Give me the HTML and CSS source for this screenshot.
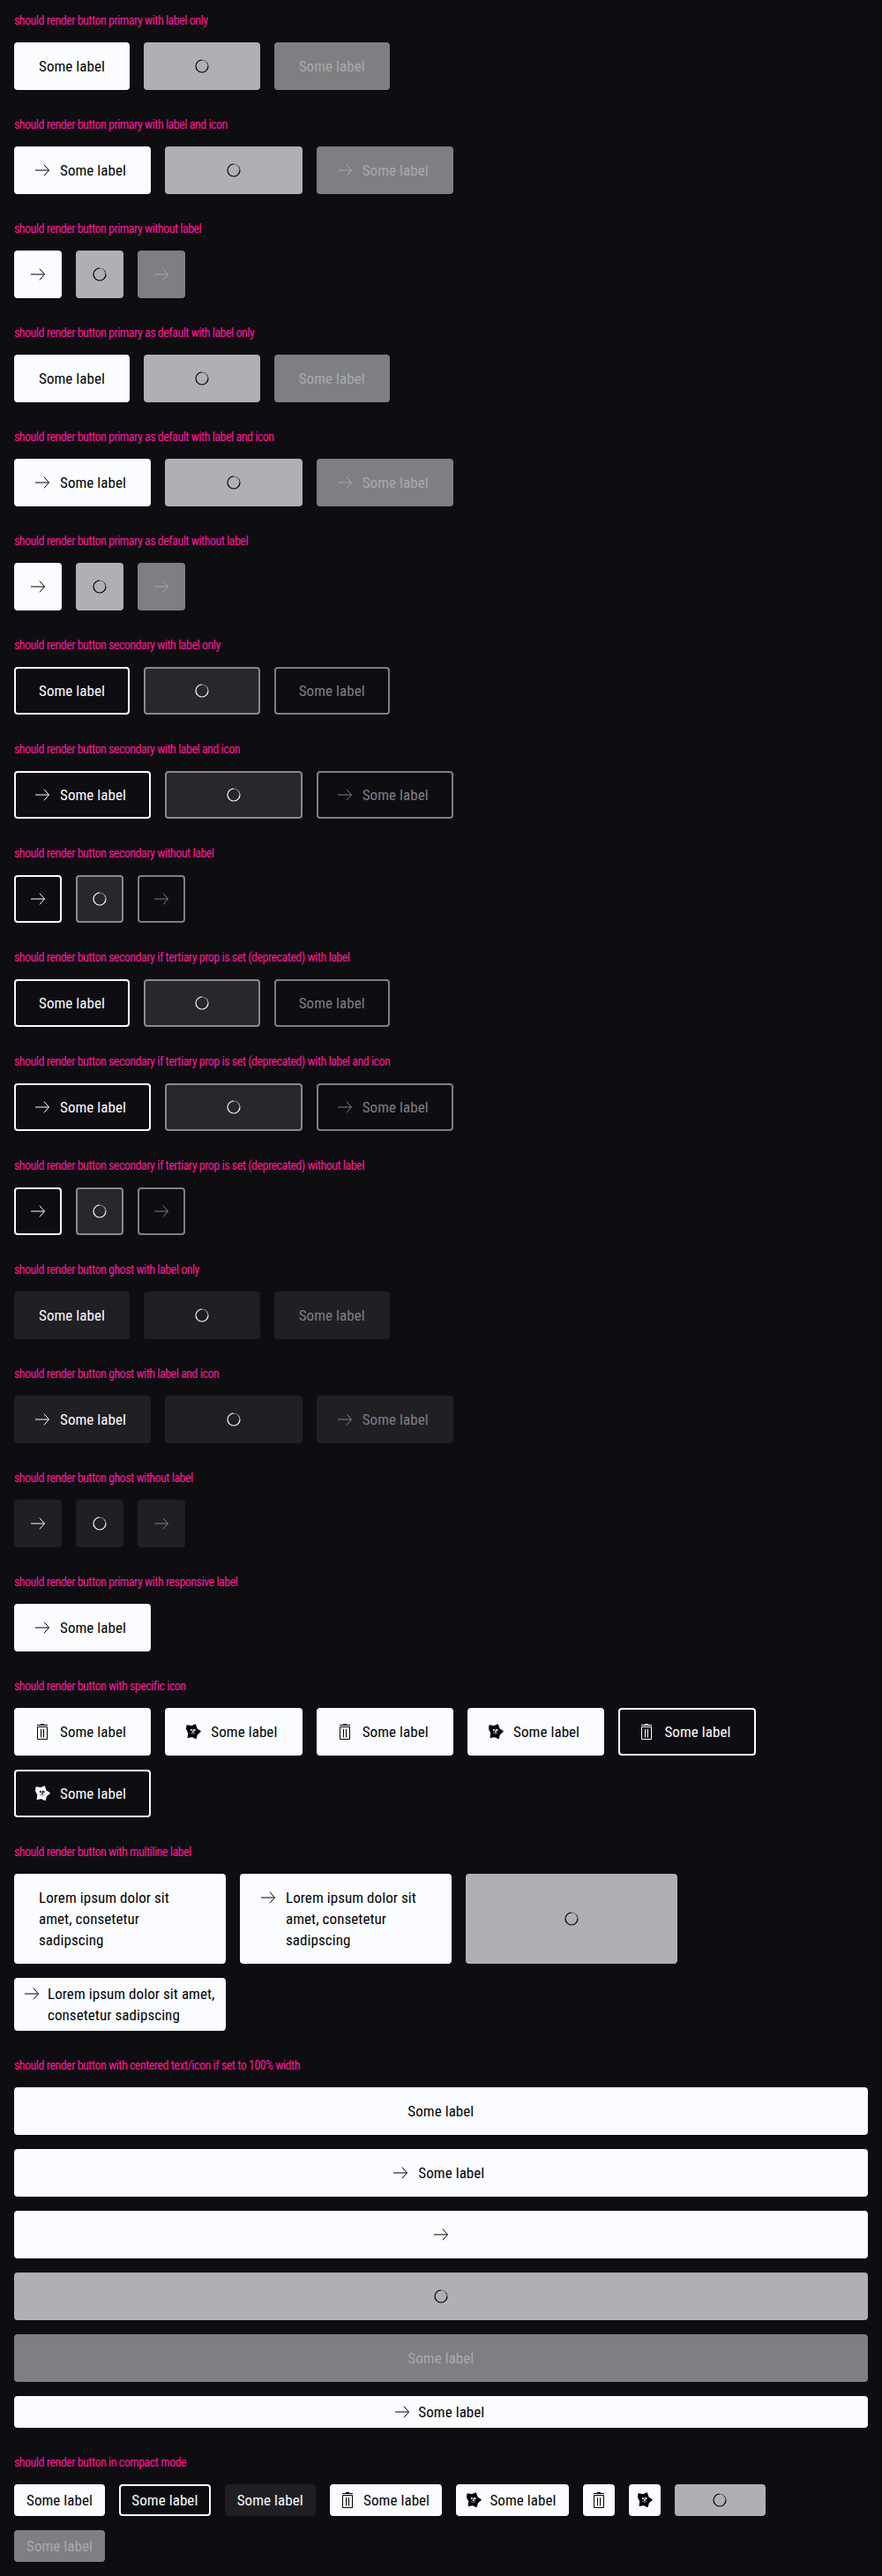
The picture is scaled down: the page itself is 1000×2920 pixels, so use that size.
FILE: index.html
```html
<!DOCTYPE html>
<html lang="en">
<head>
<meta charset="utf-8">
<title>Button</title>
<link rel="stylesheet" href="styles.css">
</head>
<body>
<svg class="sprite" aria-hidden="true">
  <symbol id="arrow" viewBox="0 0 24 24"><path d="M4 12H19.4M13.9 5.7L19.5 12L13.9 18.3" fill="none" stroke="currentColor"/></symbol>
  <symbol id="spin" viewBox="0 0 24 24"><g fill="none" stroke="currentColor" stroke-width="1.2"><path d="M12 5A7 7 0 1 0 19 12"/><path d="M19 12A7 7 0 0 0 17.4 7.6" opacity=".6"/><path d="M17.4 7.6A7 7 0 0 0 12 5" opacity=".4"/></g></symbol>
  <symbol id="trash" viewBox="0 0 24 24"><path d="M6 4.5H18M10 3.5H14M6.5 6.5H17.5V20.5H6.5ZM10.5 9V18.5M13.5 9V18.5" fill="none" stroke="currentColor"/></symbol>
  <symbol id="star" viewBox="0 0 24 24"><path d="M5.2 5L10.2 6L14.3 4.2L15.8 8.8L20 11.6L16.2 14.8L15 19.3L11 17.2L6.4 18.3L7.1 13.4L4.8 9Z" fill="currentColor" stroke="currentColor" stroke-width="1.6" stroke-linejoin="round"/><g class="face"><circle cx="10.2" cy="10" r="1.3"/><circle cx="13.2" cy="10.2" r="1.4"/><circle cx="11.8" cy="12.2" r="1"/></g><g fill="currentColor"><circle cx="10.6" cy="9.8" r=".6"/><circle cx="13" cy="10" r=".6"/></g><path class="smile" d="M9 13.2Q11.5 15.8 14.4 13.4"/></symbol>
</svg>

<section><h2>should render button primary with label only</h2><div class="row">
  <button class="btn primary"><span>Some label</span></button>
  <button class="btn primary loading"><span>Some label</span><svg><use href="#spin"/></svg></button>
  <button class="btn primary disabled"><span>Some label</span></button>
</div></section>

<section><h2>should render button primary with label and icon</h2><div class="row">
  <button class="btn primary icon"><svg><use href="#arrow"/></svg><span>Some label</span></button>
  <button class="btn primary icon loading"><span>Some label</span><svg><use href="#spin"/></svg></button>
  <button class="btn primary icon disabled"><svg><use href="#arrow"/></svg><span>Some label</span></button>
</div></section>

<section><h2>should render button primary without label</h2><div class="row">
  <button class="btn primary square"><svg><use href="#arrow"/></svg></button>
  <button class="btn primary square loading"><svg><use href="#spin"/></svg></button>
  <button class="btn primary square disabled"><svg><use href="#arrow"/></svg></button>
</div></section>

<section><h2>should render button primary as default with label only</h2><div class="row">
  <button class="btn primary"><span>Some label</span></button>
  <button class="btn primary loading"><span>Some label</span><svg><use href="#spin"/></svg></button>
  <button class="btn primary disabled"><span>Some label</span></button>
</div></section>

<section><h2>should render button primary as default with label and icon</h2><div class="row">
  <button class="btn primary icon"><svg><use href="#arrow"/></svg><span>Some label</span></button>
  <button class="btn primary icon loading"><span>Some label</span><svg><use href="#spin"/></svg></button>
  <button class="btn primary icon disabled"><svg><use href="#arrow"/></svg><span>Some label</span></button>
</div></section>

<section><h2>should render button primary as default without label</h2><div class="row">
  <button class="btn primary square"><svg><use href="#arrow"/></svg></button>
  <button class="btn primary square loading"><svg><use href="#spin"/></svg></button>
  <button class="btn primary square disabled"><svg><use href="#arrow"/></svg></button>
</div></section>

<section><h2>should render button secondary with label only</h2><div class="row">
  <button class="btn secondary"><span>Some label</span></button>
  <button class="btn secondary loading"><span>Some label</span><svg><use href="#spin"/></svg></button>
  <button class="btn secondary disabled"><span>Some label</span></button>
</div></section>

<section><h2>should render button secondary with label and icon</h2><div class="row">
  <button class="btn secondary icon"><svg><use href="#arrow"/></svg><span>Some label</span></button>
  <button class="btn secondary icon loading"><span>Some label</span><svg><use href="#spin"/></svg></button>
  <button class="btn secondary icon disabled"><svg><use href="#arrow"/></svg><span>Some label</span></button>
</div></section>

<section><h2>should render button secondary without label</h2><div class="row">
  <button class="btn secondary square"><svg><use href="#arrow"/></svg></button>
  <button class="btn secondary square loading"><svg><use href="#spin"/></svg></button>
  <button class="btn secondary square disabled"><svg><use href="#arrow"/></svg></button>
</div></section>

<section><h2>should render button secondary if tertiary prop is set (deprecated) with label</h2><div class="row">
  <button class="btn secondary"><span>Some label</span></button>
  <button class="btn secondary loading"><span>Some label</span><svg><use href="#spin"/></svg></button>
  <button class="btn secondary disabled"><span>Some label</span></button>
</div></section>

<section><h2>should render button secondary if tertiary prop is set (deprecated) with label and icon</h2><div class="row">
  <button class="btn secondary icon"><svg><use href="#arrow"/></svg><span>Some label</span></button>
  <button class="btn secondary icon loading"><span>Some label</span><svg><use href="#spin"/></svg></button>
  <button class="btn secondary icon disabled"><svg><use href="#arrow"/></svg><span>Some label</span></button>
</div></section>

<section><h2>should render button secondary if tertiary prop is set (deprecated) without label</h2><div class="row">
  <button class="btn secondary square"><svg><use href="#arrow"/></svg></button>
  <button class="btn secondary square loading"><svg><use href="#spin"/></svg></button>
  <button class="btn secondary square disabled"><svg><use href="#arrow"/></svg></button>
</div></section>

<section><h2>should render button ghost with label only</h2><div class="row">
  <button class="btn ghost"><span>Some label</span></button>
  <button class="btn ghost loading"><span>Some label</span><svg><use href="#spin"/></svg></button>
  <button class="btn ghost disabled"><span>Some label</span></button>
</div></section>

<section><h2>should render button ghost with label and icon</h2><div class="row">
  <button class="btn ghost icon"><svg><use href="#arrow"/></svg><span>Some label</span></button>
  <button class="btn ghost icon loading"><span>Some label</span><svg><use href="#spin"/></svg></button>
  <button class="btn ghost icon disabled"><svg><use href="#arrow"/></svg><span>Some label</span></button>
</div></section>

<section><h2>should render button ghost without label</h2><div class="row">
  <button class="btn ghost square"><svg><use href="#arrow"/></svg></button>
  <button class="btn ghost square loading"><svg><use href="#spin"/></svg></button>
  <button class="btn ghost square disabled"><svg><use href="#arrow"/></svg></button>
</div></section>

<section><h2>should render button primary with responsive label</h2><div class="row">
  <button class="btn primary icon"><svg><use href="#arrow"/></svg><span>Some label</span></button>
</div></section>

<section><h2>should render button with specific icon</h2><div class="row narrow">
  <button class="btn primary icon"><svg><use href="#trash"/></svg><span>Some label</span></button>
  <button class="btn primary icon"><svg><use href="#star"/></svg><span>Some label</span></button>
  <button class="btn primary icon"><svg><use href="#trash"/></svg><span>Some label</span></button>
  <button class="btn primary icon"><svg><use href="#star"/></svg><span>Some label</span></button>
  <button class="btn secondary icon"><svg><use href="#trash"/></svg><span>Some label</span></button>
  <button class="btn secondary icon"><svg><use href="#star"/></svg><span>Some label</span></button>
</div></section>

<section><h2>should render button with multiline label</h2><div class="row narrow">
  <button class="btn primary multi"><span>Lorem ipsum dolor sit<br>amet, consetetur<br>sadipscing</span></button>
  <button class="btn primary icon multi"><svg><use href="#arrow"/></svg><span>Lorem ipsum dolor sit<br>amet, consetetur<br>sadipscing</span></button>
  <button class="btn primary multi loading"><svg><use href="#spin"/></svg></button>
  <button class="btn primary icon multi compact"><svg><use href="#arrow"/></svg><span>Lorem ipsum dolor sit amet,<br>consetetur sadipscing</span></button>
</div></section>

<section><h2>should render button with centered text/icon if set to 100% width</h2><div class="row stack">
  <button class="btn primary"><span>Some label</span></button>
  <button class="btn primary icon"><svg><use href="#arrow"/></svg><span>Some label</span></button>
  <button class="btn primary"><svg><use href="#arrow"/></svg></button>
  <button class="btn primary loading"><svg><use href="#spin"/></svg></button>
  <button class="btn primary disabled"><span>Some label</span></button>
  <button class="btn primary icon compact"><svg><use href="#arrow"/></svg><span>Some label</span></button>
</div></section>

<section><h2>should render button in compact mode</h2><div class="row narrow">
  <button class="btn primary compact"><span>Some label</span></button>
  <button class="btn secondary compact"><span>Some label</span></button>
  <button class="btn ghost compact"><span>Some label</span></button>
  <button class="btn primary icon compact"><svg><use href="#trash"/></svg><span>Some label</span></button>
  <button class="btn primary icon compact"><svg><use href="#star"/></svg><span>Some label</span></button>
  <button class="btn primary square compact"><svg><use href="#trash"/></svg></button>
  <button class="btn primary square compact"><svg><use href="#star"/></svg></button>
  <button class="btn primary compact loading"><span>Some label</span><svg><use href="#spin"/></svg></button>
  <button class="btn primary compact disabled"><span>Some label</span></button>
</div></section>
</body>
</html>
```
FILE: styles.css
```css
* { box-sizing: border-box; }

body {
  margin: 0;
  background: #0e0e12;
  font-family: "Roboto Condensed", Roboto, sans-serif;
}

.sprite { display: none; }

section { padding: 15px 16px 16px; }

h2 {
  margin: 0 0 17px;
  font-size: 14px;
  font-weight: 400;
  line-height: 16px;
  letter-spacing: -0.52px;
  word-spacing: 0.1px;
  color: #fc1799;
}

.row { display: flex; flex-wrap: wrap; gap: 16px; }
.narrow { max-width: 890px; }
.stack { flex-direction: column; }

.btn {
  --surface: #fbfcff;
  display: flex;
  justify-content: center;
  align-items: flex-start;
  gap: 8px;
  margin: 0;
  padding: 13px 26px;
  border: 2px solid transparent;
  border-radius: 4px;
  font-family: inherit;
  font-size: 17px;
  font-weight: 400;
  line-height: 24px;
  letter-spacing: 0.07px;
  text-align: left;
  white-space: nowrap;
}

.btn span { min-width: 75.36px; }
.btn svg { width: 24px; height: 24px; flex: none; }
.btn.icon { padding-left: 18px; }
.btn.square { padding: 13px; }

.btn.compact { padding: 4px 12px; gap: 6px; }
.btn.compact.icon { padding-left: 6px; }
.btn.compact.square { padding: 4px; }

.primary { background: #fbfcff; border-color: #fbfcff; color: #010205; }
.primary.loading { background: #afb0b3; border-color: #afb0b3; }
.primary.disabled { background: #7e7f82; border-color: #7e7f82; color: #a9aaad; }

.secondary { --surface: #0e0e12; background: transparent; border-color: #fbfcff; color: #fbfcff; }
.secondary.loading { background: #28272c; border-color: #88898c; }
.secondary.disabled { border-color: #7e7f82; color: #7e7f82; }

.ghost { background: #201f24; border-color: #201f24; color: #fbfcff; }
.ghost.disabled { color: #7e7f82; }

/* The spinner shares the label's grid cell, so the button keeps its width. */
.btn.loading { display: grid; place-items: center; justify-content: center; }
.btn.loading > * { grid-area: 1 / 1; }
.btn.loading span { visibility: hidden; }
.btn.icon.loading { padding-left: 38px; padding-right: 38px; }

.multi { width: 240px; justify-content: flex-start; }

.face { fill: var(--surface); }
.smile { fill: none; stroke: var(--surface); stroke-width: 0.5; }
```
